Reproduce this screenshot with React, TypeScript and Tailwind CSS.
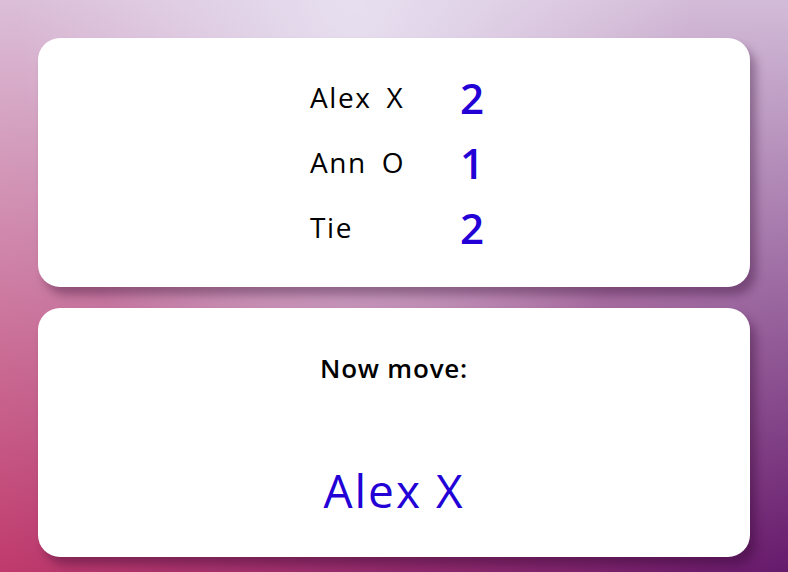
const scores = [
  { name: "Alex X", score: 2 },
  { name: "Ann O", score: 1 },
  { name: "Tie", score: 2 },
];

export default function App() {
  return (
    <div
      className="w-[788px] h-[572px] px-[38px] pt-[38px] flex flex-col gap-[21px] bg-[radial-gradient(ellipse_at_45%_0%,rgba(232,226,242,0.95)_0%,rgba(232,226,242,0)_55%),linear-gradient(to_bottom,rgba(222,205,228,0.9)_0%,rgba(222,205,228,0)_100%),linear-gradient(to_right,#c03a6c,#661a6c)]"
      style={{ fontFamily: '"Open Sans", "Noto Sans", sans-serif' }}
    >
      <div className="h-[249px] bg-white rounded-[22px] shadow-[6px_8px_10px_rgba(40,0,40,0.35)] flex items-center justify-center">
        <div className="grid grid-cols-[150px_auto] pl-[6px]">
          {scores.map((s) => (
            <div key={s.name} className="contents">
              <div className="h-[65px] flex items-center text-[28px] text-black tracking-[1.6px] [word-spacing:6px] pb-[2px]">{s.name}</div>
              <div className="h-[65px] flex items-center text-[42px] font-semibold text-[#2200d6]">{s.score}</div>
            </div>
          ))}
        </div>
      </div>
      <div className="h-[249px] bg-white rounded-[22px] shadow-[6px_8px_10px_rgba(40,0,40,0.35)] flex flex-col items-center pt-[42px]">
        <div className="h-[36px] leading-[36px] text-[26px] font-semibold text-black tracking-[0.8px]">Now move:</div>
        <div className="mt-[76px] h-[56px] leading-[56px] text-[46px] text-[#2200d6] tracking-[2px]">Alex X</div>
      </div>
    </div>
  );
}
